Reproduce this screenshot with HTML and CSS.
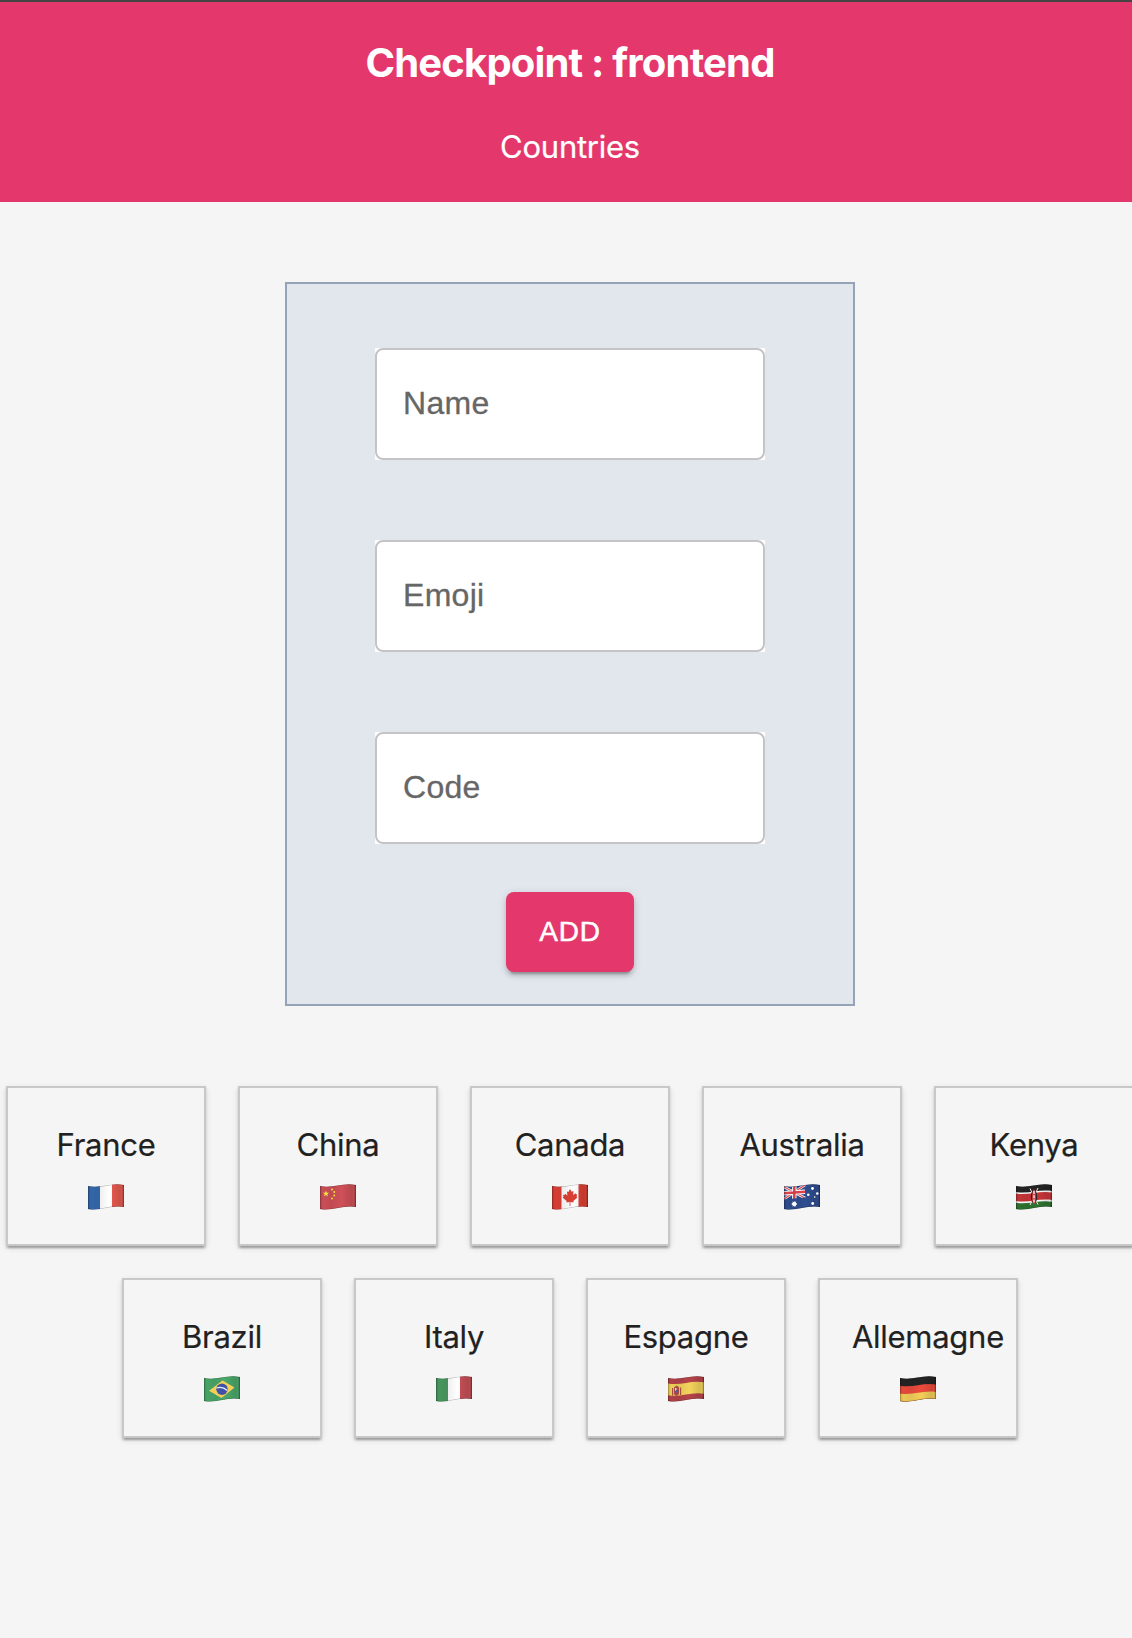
FILE: index.html
```html
<!DOCTYPE html>
<html lang="en">
<head>
<meta charset="utf-8">
<title>Checkpoint : frontend</title>
<link rel="stylesheet" href="styles.css">
</head>
<body>
<svg class="defs" width="0" height="0" aria-hidden="true">
  <defs>
    <clipPath id="wave"><path d="M0 2C13 4.800 22-1.800 36 1V23C23 20.500 13 27.500 0 25Z"/></clipPath>
    <linearGradient id="shade">
      <stop offset="0" stop-opacity=".2"/><stop offset=".08" stop-opacity=".03"/><stop offset=".3" stop-opacity=".07"/>
      <stop offset=".6" stop-opacity="0"/><stop offset=".88" stop-opacity=".12"/><stop offset=".94" stop-opacity=".08"/><stop offset="1" stop-opacity=".35"/>
    </linearGradient>
    <g id="fold">
      <path d="M0 0H36V26H0Z" fill="url(#shade)"/>
      <path d="M0 2C13 4.800 22-1.800 36 1V23C23 20.500 13 27.500 0 25Z" fill="none" stroke="#000" stroke-opacity=".3"/>
    </g>
    <path id="star" d="M0-3L.9-.9 3-.9 1.300.5 1.900 2.700 0 1.400-1.900 2.700-1.300.5-3-.9-.9-.9Z"/>
  </defs>
</svg>
<div class="page">
  <header class="header">
    <h1 class="title">Checkpoint : frontend</h1>
    <p class="subtitle">Countries</p>
  </header>
  <main class="main">
    <form class="form">
      <label class="field"><span class="label">Name</span></label>
      <label class="field"><span class="label">Emoji</span></label>
      <label class="field"><span class="label">Code</span></label>
      <button class="button" type="button">ADD</button>
    </form>
    <section class="countries">
      <article class="card"><p class="name">France</p>
        <svg class="flag" viewBox="0 0 36 26"><g clip-path="url(#wave)"><path fill="#356aae" d="M0 0H12V26H0Z"/><path fill="#fff" d="M12 0H24V26H12Z"/><path fill="#e65a50" d="M24 0H36V26H24Z"/><use href="#fold"/></g></svg>
      </article>
      <article class="card"><p class="name">China</p>
        <svg class="flag" viewBox="0 0 36 26"><g clip-path="url(#wave)"><path fill="#cf5058" d="M0 0H36V26H0Z"/><use href="#fold"/><g fill="#f7e441"><use href="#star" transform="translate(6 9.700)"/><circle cx="12" cy="5.500" r=".9"/><circle cx="14.300" cy="8" r=".9"/><circle cx="14.300" cy="11.500" r=".9"/><circle cx="12" cy="14.500" r=".9"/></g></g></svg>
      </article>
      <article class="card"><p class="name">Canada</p>
        <svg class="flag" viewBox="0 0 36 26"><g clip-path="url(#wave)"><path fill="#fff" d="M0 0H36V26H0Z"/><path fill="#dc4035" d="M0 0H9.500V26H0ZM26.500 0H36V26H26.500ZM18 5l1.700 2.800L21.500 7l-.4 4 2.400-1.800.7 1.400 1-.3-.6 2.500.8.8-4 3.500.2 1.500-3.200-.5V22h-.8v-3.900l-3.200.5.2-1.500-4-3.500 1-.8-.6-2 1.500.2.600-1.300L15.400 11.500 15 7.500l1.500.5Z"/><use href="#fold"/></g></svg>
      </article>
      <article class="card"><p class="name">Australia</p>
        <svg class="flag" viewBox="0 0 36 26"><g clip-path="url(#wave)"><path fill="#2f4d90" d="M0 0H36V26H0Z"/><path stroke="#fff" stroke-width="2.600" d="M0 3L21 14M0 15L21 1"/><path stroke="#e0454f" stroke-width="1.100" d="M0 3L21 14M0 15L21 1"/><path stroke="#fff" stroke-width="4.500" d="M10.300 0V15M0 9.200L21 7.800"/><path stroke="#e0454f" stroke-width="2.400" d="M10.300 0V15M0 9.200L21 7.800"/><path fill="#2f4d90" d="M0 15.500L21 13.500V20H0Z"/><use href="#fold"/><g fill="#fff"><use href="#star" transform="translate(10.300 20)"/><use href="#star" transform="translate(10.300 20) rotate(180)"/><circle cx="28.500" cy="4.500" r="1.400"/><circle cx="24.300" cy="10.800" r="1.300"/><circle cx="33.300" cy="9.500" r="1.300"/><circle cx="30.700" cy="13" r=".8"/><circle cx="28.700" cy="19.500" r="1.400"/></g></g></svg>
      </article>
      <article class="card"><p class="name">Kenya</p>
        <svg class="flag" viewBox="0 0 36 26"><g clip-path="url(#wave)"><path fill="#fff" d="M0 0H36V26H0Z"/><path fill="#242424" d="M0 0H36V7C23 5 13 10.200 0 8Z"/><path fill="#c93538" d="M0 9.500C13 11.800 23 6.200 36 8.500V16C23 14 13 19.200 0 17Z"/><path fill="#2f7430" d="M0 18.800C13 21 23 15.500 36 17.800V26H0Z"/><use href="#fold"/><path stroke="#f4e7e7" d="M14 4.500L22 20.500M22 4L14 21"/><ellipse cx="18" cy="12.800" rx="3.200" ry="6.800" fill="#242424"/><ellipse cx="18" cy="12.800" rx="1.900" ry="7.300" fill="#d34047"/><path stroke="#fff" stroke-width="1.200" d="M18 7V19" stroke-dasharray="3 1.200"/></g></svg>
      </article>
      <article class="card"><p class="name">Brazil</p>
        <svg class="flag" viewBox="0 0 36 26"><g clip-path="url(#wave)"><path fill="#4aa86a" d="M0 0H36V26H0Z"/><use href="#fold"/><path fill="#f5cf57" d="M5 14.800L18.500 4.500 30.500 11.500 17.500 22Z"/><circle cx="18" cy="13.200" r="5.700" fill="#4052a8"/><path d="M12.500 12Q18.500 10 23.300 14.500" fill="none" stroke="#e8f0ff" stroke-width="1.200"/></g></svg>
      </article>
      <article class="card"><p class="name">Italy</p>
        <svg class="flag" viewBox="0 0 36 26"><g clip-path="url(#wave)"><path fill="#4a9a61" d="M0 0H12V26H0Z"/><path fill="#fff" d="M12 0H24V26H12Z"/><path fill="#c65056" d="M24 0H36V26H24Z"/><use href="#fold"/></g></svg>
      </article>
      <article class="card"><p class="name">Espagne</p>
        <svg class="flag" viewBox="0 0 36 26"><g clip-path="url(#wave)"><path fill="#b5434a" d="M0 0H36V26H0Z"/><path fill="#f3d35b" d="M0 7.500C13 9.800 23 4 36 6.300V17.800C23 15.500 13 21.500 0 19.300Z"/><use href="#fold"/><path fill="#a94b3f" d="M4 12H5.200V19.500H4ZM12 11.500H13.200V19H12ZM6 11.500L8.600 9.500 11 11.300V18L8.600 20 6 18.200Z"/><path fill="#e9dcc9" d="M7 12H8.500V15H7Z"/><circle cx="8.700" cy="15.300" r="1.400" fill="#4c5d9b"/></g></svg>
      </article>
      <article class="card"><p class="name">Allemagne</p>
        <svg class="flag" viewBox="0 0 36 26"><g clip-path="url(#wave)"><path fill="#242424" d="M0 0H36V26H0Z"/><path fill="#ec4b3c" d="M0 9.700C13 12 23 6.200 36 8.500V26H0Z"/><path fill="#f3cf58" d="M0 17.500C13 19.700 23 13.800 36 16V26H0Z"/><use href="#fold"/></g></svg>
      </article>
    </section>
  </main>
</div>
</body>
</html>
```

FILE: styles.css
```css
* { box-sizing: border-box; }

html { overflow: hidden; }

body {
  margin: 0;
  min-height: 1638px;
  background: #f5f5f5;
  color: #212121;
  font-family: Inter, "Liberation Sans", sans-serif;
  font-size: 31px;
}

.defs { position: absolute; }

.page { width: 1140px; }

.header {
  height: 202px;
  padding-top: 37px;
  border-top: 2px solid #444;
  background: #e4376b;
  color: #fff;
  text-align: center;
}

.title {
  margin: 0 0 40px;
  font-size: 40px;
  line-height: 48px;
  font-weight: 700;
  letter-spacing: -0.82px;
}

.subtitle {
  margin: 0;
  line-height: 40px;
  letter-spacing: -0.25px;
  -webkit-text-stroke: 0.2px;
}

.main {
  display: flex;
  flex-direction: column;
  align-items: center;
  gap: 80px;
  padding-top: 80px;
}

.form {
  display: flex;
  flex-direction: column;
  align-items: center;
  gap: 80px;
  width: 570px;
  height: 724px;
  padding-top: 64px;
  border: 2px solid #94a3b8;
  background: #e2e7ee;
  font-family: "Liberation Sans", Arial, sans-serif;
  font-size: 32px;
}

.field {
  width: 390px;
  background: #fff;
}

.label {
  display: block;
  height: 112px;
  padding-left: 26px;
  border: 2px solid #c4c4c4;
  border-radius: 8px;
  color: #666;
  line-height: 106px;
  letter-spacing: 0.3px;
  -webkit-text-stroke: 0.3px;
}

.button {
  width: 128px;
  height: 80px;
  margin-top: -32px;
  padding: 0;
  border: 0;
  border-radius: 8px;
  background: #e4376b;
  box-shadow: 0 6px 2px -4px rgba(0, 0, 0, 0.2), 0 4px 4px rgba(0, 0, 0, 0.14), 0 2px 10px rgba(0, 0, 0, 0.12);
  color: #fff;
  font: 28px "Liberation Sans", Arial, sans-serif;
  letter-spacing: 0.8px;
  -webkit-text-stroke: 0.5px;
}

.countries {
  display: flex;
  flex-wrap: wrap;
  justify-content: center;
  gap: 32px;
  width: 1140px;
}

.card {
  display: flex;
  flex-direction: column;
  align-items: center;
  width: 200px;
  height: 160px;
  padding: 37px 32px 0;
  border: 2px solid #c8c8c8;
  box-shadow: 0 4px 2px -2px rgba(0, 0, 0, 0.2), 0 2px 2px rgba(0, 0, 0, 0.14), 0 2px 6px rgba(0, 0, 0, 0.12);
}

.name {
  width: 100%;
  margin: 0 0 19px;
  line-height: 40px;
  letter-spacing: -0.28px;
  text-align: center;
  white-space: nowrap;
  -webkit-text-stroke: 0.2px;
}

.flag {
  flex: none;
  width: 36px;
  height: 26px;
}
```
